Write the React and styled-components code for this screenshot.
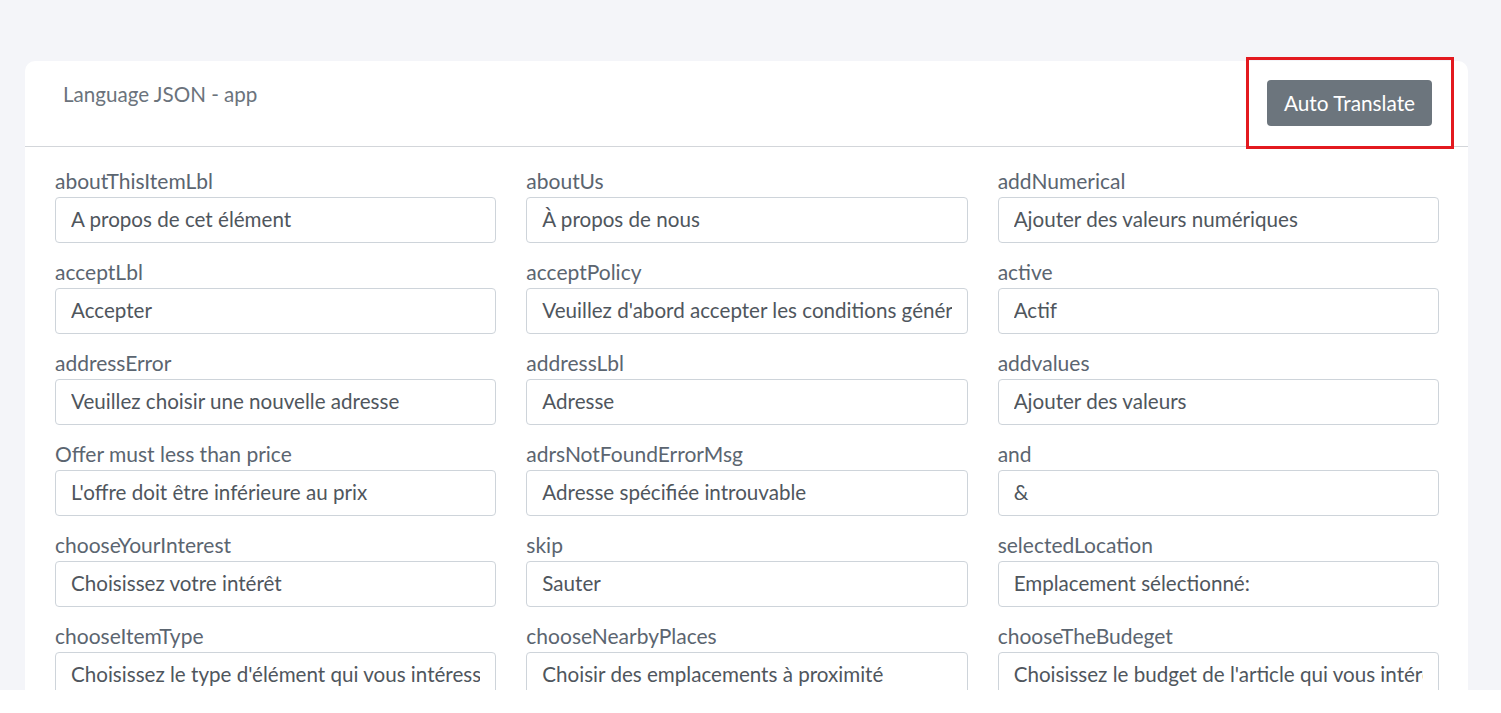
import React from "react"
import styled, { createGlobalStyle } from "styled-components"

const GlobalStyle = createGlobalStyle`
  html, body {
    margin: 0;
    background: #ffffff;
    font-family: "Lato", "Liberation Sans", sans-serif;
  }
`

const Page = styled.div`
  height: 690px;
  overflow: hidden;
  background: #f4f5f9;
  padding: 61px 33px 0 25px;
  box-sizing: border-box;
`

const Card = styled.div`
  background: #ffffff;
  border-radius: 10px;
`

const CardHeader = styled.div`
  position: relative;
  display: flex;
  align-items: flex-start;
  justify-content: space-between;
  height: 85px;
  padding: 0 36px 0 38px;
  border-bottom: 1px solid #d3d6da;
`

const Title = styled.h5`
  margin: 19px 0 0;
  font-size: 20.6px;
  line-height: 28px;
  font-weight: 400;
  color: #6b737c;
`

const Button = styled.button`
  margin-top: 19px;
  width: 165px;
  height: 46px;
  padding: 0 0 2px;
  border: none;
  border-radius: 4px;
  background: #6c757d;
  color: #ffffff;
  font-family: inherit;
  font-size: 20.8px;
`

const Highlight = styled.div`
  position: absolute;
  top: -4px;
  right: 14px;
  width: 208px;
  height: 92px;
  box-sizing: border-box;
  border: 3px solid #e3191f;
  pointer-events: none;
`

const CardBody = styled.div`
  display: grid;
  grid-template-columns: repeat(3, 1fr);
  column-gap: 30px;
  padding: 21px 29px 0 30px;
`

const Field = styled.div`
  display: flex;
  flex-direction: column;
  margin-bottom: 16px;
`

const Label = styled.label`
  font-size: 21px;
  line-height: 26px;
  margin-bottom: 3px;
  color: #5b6570;
`

const Input = styled.input`
  height: 46px;
  box-sizing: border-box;
  padding: 0 15px 3px;
  border: 1px solid #ced4da;
  border-radius: 4px;
  font-family: inherit;
  font-size: 20.6px;
  color: #4f565d;
  background: #fff;
  outline: none;
`

const entries = [
  ["aboutThisItemLbl", "A propos de cet élément"],
  ["aboutUs", "À propos de nous"],
  ["addNumerical", "Ajouter des valeurs numériques"],
  ["acceptLbl", "Accepter"],
  ["acceptPolicy", "Veuillez d'abord accepter les conditions générales"],
  ["active", "Actif"],
  ["addressError", "Veuillez choisir une nouvelle adresse"],
  ["addressLbl", "Adresse"],
  ["addvalues", "Ajouter des valeurs"],
  ["Offer must less than price", "L'offre doit être inférieure au prix"],
  ["adrsNotFoundErrorMsg", "Adresse spécifiée introuvable"],
  ["and", "&"],
  ["chooseYourInterest", "Choisissez votre intérêt"],
  ["skip", "Sauter"],
  ["selectedLocation", "Emplacement sélectionné:"],
  ["chooseItemType", "Choisissez le type d'élément qui vous intéresse"],
  ["chooseNearbyPlaces", "Choisir des emplacements à proximité"],
  ["chooseTheBudeget", "Choisissez le budget de l'article qui vous intéresse"],
]

function App () {
  return (
    <Page>
      <GlobalStyle />
      <Card>
        <CardHeader>
          <Title>Language JSON - app</Title>
          <Button>Auto Translate</Button>
          <Highlight />
        </CardHeader>
        <CardBody>
          {entries.map(([key, value]) => (
            <Field key={key}>
              <Label>{key}</Label>
              <Input defaultValue={value} />
            </Field>
          ))}
        </CardBody>
      </Card>
    </Page>
  )
}

export default App
